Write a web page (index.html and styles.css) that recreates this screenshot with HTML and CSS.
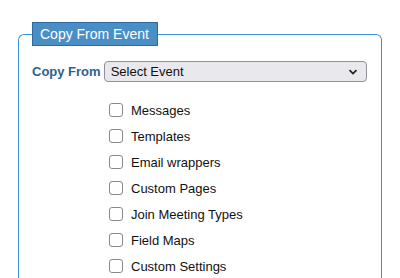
FILE: index.html
```html
<!DOCTYPE html>
<html lang="en">
<head>
  <meta charset="UTF-8">
  <title>Copy From Event</title>
  <link rel="stylesheet" href="styles.css">
</head>
<body>
  <div class="page">
    <fieldset class="copy-box">
      <legend>Copy From Event</legend>

      <div class="from-row">
        <label for="event">Copy From</label>
        <span class="select-wrap">
          <select id="event">
            <option>Select Event</option>
          </select>
          <svg class="chev" width="10" height="6" viewBox="0 0 10 6"><path d="M1.5 1.2 L5 4.6 L8.5 1.2" fill="none" stroke="#222" stroke-width="1.8"/></svg>
        </span>
      </div>

      <ul class="items">
        <li><label><input type="checkbox"> Messages</label></li>
        <li><label><input type="checkbox"> Templates</label></li>
        <li><label><input type="checkbox"> Email wrappers</label></li>
        <li><label><input type="checkbox"> Custom Pages</label></li>
        <li><label><input type="checkbox"> Join Meeting Types</label></li>
        <li><label><input type="checkbox"> Field Maps</label></li>
        <li><label><input type="checkbox"> Custom Settings</label></li>
      </ul>
    </fieldset>
  </div>
</body>
</html>
```

FILE: styles.css
```css
body { margin: 0; font-family: "Liberation Sans", Arial, sans-serif; font-size: 13px; color: #111; background: #fff; }
.page { padding: 22px 18px 0 18px; }
.copy-box { margin: 0; padding: 4px 14px 20px 13px; border: 1px solid; border-color: #3d95dc #808080 #808080 #3d95dc; border-radius: 6px; min-width: 0; }
.copy-box legend { background: #4a8ec6; border: 1px solid #2d6a9f; color: #fff; font-size: 14px; padding: 3px 8px 3px 7px; line-height: 16px; }
.from-row { display: flex; align-items: center; gap: 3px; margin-top: 11px; }
.from-row label { font-weight: bold; color: #2e5f95; font-size: 13px; }
.select-wrap { position: relative; flex: 1; }
.select-wrap select { appearance: none; -webkit-appearance: none; width: 100%; height: 21px; padding: 0 6px; background: #e9e9ed; border: 1px solid #8f8f9d; border-radius: 4px; font-family: inherit; font-size: 13px; color: #111; }
.chev { position: absolute; right: 9px; top: 8px; pointer-events: none; }
.items { list-style: none; margin: 15px 0 0 0; padding: 0 0 0 77px; }
.items li { height: 26px; display: flex; align-items: center; }
.items label { display: flex; align-items: center; gap: 8px; }
.items input { appearance: none; -webkit-appearance: none; margin: 0; width: 14px; height: 14px; border: 1px solid #8a8a8a; border-radius: 3px; background: #fff; }
```
